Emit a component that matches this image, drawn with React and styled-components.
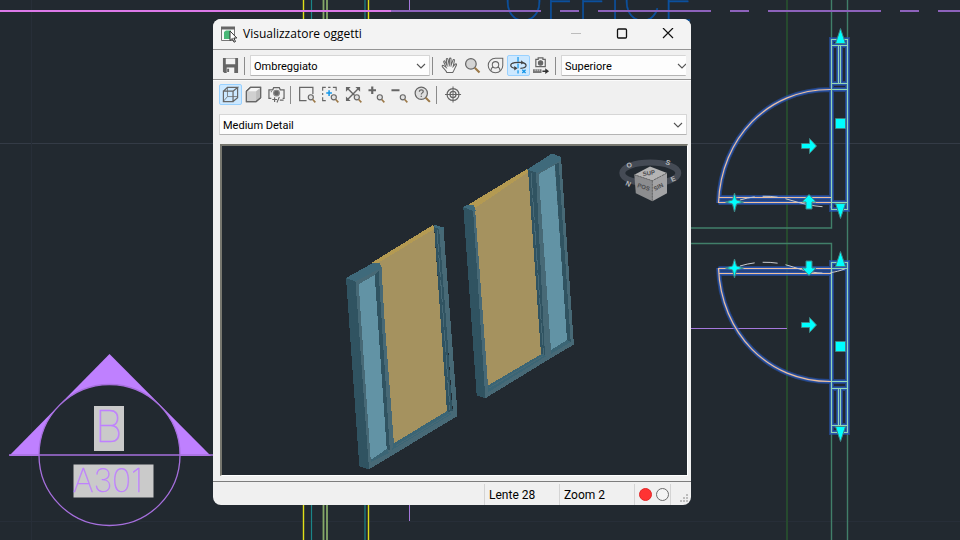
import React, { Fragment } from 'react';
import styled, { createGlobalStyle } from 'styled-components';

const GlobalStyle = createGlobalStyle`
    * {
        box-sizing: border-box;
    }

    body {
        margin: 0;
        background: #222930;
        color: #000;
        font-family: 'Open Sans', 'Noto Sans', sans-serif;
        font-size: 12px;
    }
`;

const Desktop = styled.main`
    position: relative;
    display: flex;
    min-height: 100vh;
    padding: 19px 269px 35px 213px;
    overflow: hidden;
`;

const Drawing = styled.svg`
    position: absolute;
    inset: 0;
    width: 100%;
    height: 100%;
    font-family: Inter, sans-serif;
    font-weight: 100;
`;

const Dialog = styled.section`
    position: relative;
    display: flex;
    flex-direction: column;
    flex: 1;
    min-width: 0;
    border-radius: 8px;
    background: #f0f0f0;
    overflow: hidden;
`;

const TitleBar = styled.header`
    display: flex;
    align-items: center;
    height: 30px;
    padding-left: 8px;
    background: #f3f3f3;
`;

const Title = styled.h1`
    flex: 1;
    margin: 0 0 0 6px;
    font-size: 12px;
    font-weight: 400;
    line-height: 16px;
    white-space: nowrap;
`;

const WindowButton = styled.button`
    display: grid;
    place-items: center;
    width: 46px;
    height: 30px;
    padding: 0;
    border: 0;
    background: transparent;
    color: ${props => (props.$muted ? '#bcbcbc' : '#111')};
`;

const Toolbar = styled.div`
    display: flex;
    align-items: center;
    height: 31px;
    padding: 2px 0 0 6px;
    border-top: 1px solid #949494;
    border-bottom: 1px solid #949494;
`;

const SecondToolbar = styled(Toolbar)`
    height: 30px;
    padding: 0 0 2px 6px;
    border-top-color: #fbfbfb;
    border-bottom: 0;
`;

const ToolButton = styled.button`
    display: grid;
    place-items: center;
    flex: none;
    width: 23px;
    height: 21px;
    padding: 0;
    border: 1px solid ${props => (props.$active ? '#99d1ff' : 'transparent')};
    border-radius: 2px;
    background: ${props => (props.$active ? '#cce8ff' : 'transparent')};
    color: #666;
`;

const Divider = styled.span`
    flex: none;
    width: 1px;
    height: 18px;
    margin: 0 5px 0 2px;
    background: #8b8b8b;
`;

const SelectBox = styled.div`
    display: grid;
    grid-template-columns: 1fr 18px;
    align-items: center;
    flex: ${props => props.$flex};
    min-width: 0;
    height: 21px;
    margin-right: ${props => (props.$clipped ? '5px' : '0')};
    overflow: hidden;
`;

const Select = styled.select`
    grid-row: 1;
    grid-column: 1 / 3;
    width: 100%;
    height: 21px;
    padding: 1px 18px 0 3px;
    border: 1px solid #d6d6d6;
    border-right-width: ${props => (props.$clipped ? '0' : '1px')};
    border-bottom-color: #b4b4b4;
    border-radius: 1px;
    background: #fdfdfd;
    color: #000;
    font-family: Roboto, sans-serif;
    font-size: 11px;
    appearance: none;
`;

const Chevron = styled.svg`
    grid-row: 1;
    grid-column: 2;
    z-index: 1;
    width: 10px;
    height: 6px;
    margin-left: ${props => (props.$clipped ? '9px' : '4px')};
    pointer-events: none;
`;

const DetailRow = styled.div`
    display: flex;
    padding: 4px 4px 9px 6px;
`;

const ViewFrame = styled.div`
    display: flex;
    flex-direction: column;
    flex: 1;
    min-height: 0;
    margin: 0 3px 5px 7px;
    border: solid;
    border-width: 2px 1px 1px 2px;
    border-color: #77776f #fff #fff #77776f;
    background: #222930;
`;

const Scene = styled.svg`
    display: block;
    flex: 1 1 0;
    width: 100%;
    min-height: 0;
    font-family: 'Liberation Sans', sans-serif;
`;

const StatusBar = styled.footer`
    display: flex;
    justify-content: flex-end;
    height: 24px;
    padding: 2px 0 0;
    border-top: 1px solid #7d7d7d;
    font-family: Roboto, sans-serif;
`;

const StatusCell = styled.span`
    display: flex;
    align-items: center;
    gap: 4px;
    width: ${props => props.$width}px;
    padding-left: 4px;
    border-left: 1px solid #d4d4d4;
    line-height: 16px;
    white-space: nowrap;
`;

const GripCell = styled.span`
    display: flex;
    align-items: flex-end;
    border-left: 1px solid #d4d4d4;
`;

const Lamp = styled.span`
    width: 13px;
    height: 13px;
    border: 1px solid ${props => (props.$on ? '#e02828' : '#6b6b6b')};
    border-radius: 50%;
    background: ${props => (props.$on ? '#ff3333' : '#f4f4f4')};
`;

const Icon = ({ children }) => (
    <svg width="17" height="17" viewBox="0 0 18 18" fill="none" stroke="#666" strokeWidth="1.3" aria-hidden="true">
        {children}
    </svg>
);

// small lens shared by the zoom icons
const Lens = () => (
    <g>
        <circle cx="12.5" cy="12" r="2.7" fill="#e2e2e2" strokeWidth="1.2" />
        <path d="M14.5 14.3l2.8 3" stroke="#9b7847" strokeWidth="1.7" />
    </g>
);

const icons = {
    save: (
        <Icon>
            <path d="M1 1h16v16H2.5L1 15.5z" fill="#666" stroke="none" />
            <path d="M4 1.6h10v6H4z" fill="#f3f3f3" stroke="none" />
            <path d="M5 11h8v6H5z" fill="#f3f3f3" stroke="none" />
            <path d="M6.5 12.5v3.5" strokeWidth="2" />
        </Icon>
    ),
    hand: (
        <Icon>
            <path
                d="M6.2 16.5C5.5 14 2.8 12 1.4 10.2c-.6-1 .5-1.8 1.5-1L5.5 11 2.9 5.3c-.4-1.2 1-1.7 1.5-.6l2.2 4.5-1-6.7c-.1-1.2 1.4-1.4 1.7-.2L8.8 8.5 9 2c.1-1.1 1.6-1.1 1.6.1l.1 6.6 2-5.4c.4-1.1 1.8-.6 1.5.5L12.9 10l2.2-2.4c.8-.8 1.8 0 1.2 1-1.4 2.4-2.2 5.4-4 7.9z"
                fill="#f6f6f6"
                strokeWidth="1.1"
            />
            <path d="M6.6 9.2l.7 1M8.8 8.5v1.4M10.7 8.7l-.2 1.5" strokeWidth="1" />
        </Icon>
    ),
    lens: (
        <Icon>
            <circle cx="7.3" cy="7.3" r="5.6" fill="#d4d4d4" />
            <path d="M11.4 11.4l5 5" stroke="#9b7847" strokeWidth="2.2" />
        </Icon>
    ),
    wheel: (
        <Icon>
            <path d="M9 1.3h7.7V9A7.7 7.7 0 1 1 9 1.3z" strokeWidth="1.1" />
            <circle cx="9" cy="8.3" r="3.4" strokeWidth="1.1" />
            <path d="M4.2 14.5c0-2.2 1-3.6 2.5-4M13.8 14.5c0-2.2-1-3.6-2.5-4" strokeWidth="1.1" />
        </Icon>
    ),
    orbit: (
        <Icon>
            <path d="M8.5 0v5M8.5 7v5M8.5 14v3.5M13 13.5l3.5 3.5M16.500 13.500L13 17" stroke="#1295e8" strokeWidth="1.3" />
            <path d="M6 12C-1 11-.5 7 5 6c6-1 12 0 12 3 0 1.800-2.500 2.800-6 3" stroke="#444" />
            <path d="M4.500 9.500L8 12l-3.500 2.300zM11.800 3.500l3 2.500-3 2z" fill="#444" stroke="none" />
        </Icon>
    ),
    walk: (
        <Icon>
            <path d="M3 2.500h2.500V1h5v1.500H13v7.700H3z" />
            <circle cx="8" cy="6.3" r="2.2" fill="#666" />
            <path d="M0 13h9v4H0z" fill="#777" stroke="none" />
            <path d="M2.3 13v2M4.5 13v2M6.700 13v2" stroke="#f0f0f0" strokeWidth=".7" />
            <path d="M10 15h4" stroke="#333" strokeWidth="1.6" />
            <path d="M13 12l4 3-4 3z" fill="#333" stroke="none" />
        </Icon>
    ),
    wire: (
        <Icon>
            <path d="M1.5 5.5h10.2v11H1.5zM1.5 5.5l4.3-4h10.7l-4.8 4M16.5 1.5v10.8l-4.8 4.2" />
            <path d="M5.8 1.5v9.7h10.7M5.8 11.2l-4.3 5" strokeWidth=".8" />
        </Icon>
    ),
    solid: (
        <Icon>
            <path d="M1.5 5.5l4.3-4h10.7v10.8l-4.8 4.2H1.5z" fill="#f5f5f5" />
            <path d="M1.5 5.5h10.2v11H1.5z" fill="#d0d0d0" stroke="none" />
            <path d="M11.7 5.5l4.3-3.5v10l-4.3 4z" fill="#bdbdbd" stroke="none" />
            <path d="M1.5 5.5l4.3-4h10.7v10.8l-4.8 4.2H1.5z" />
        </Icon>
    ),
    camera: (
        <Icon>
            <path d="M3.5 13H1V4h4l1-2.2h6L13 4h4v9h-1.5" />
            <circle cx="9" cy="7.5" r="3" fill="#666" stroke="#888" />
            <path d="M3 6h1" />
            <path d="M4.5 14.3h5M7 12v5M12 11.5l-2.5 6M12.5 15h4" strokeWidth="1.2" />
        </Icon>
    ),
    region: (
        <Icon>
            <path d="M8 15.5H.7v-14h14v7" />
            <Lens />
        </Icon>
    ),
    extent: (
        <Icon>
            <path d="M.7 5V1.5H4M11.5 1.5H15V5M.7 12v3.5H4M6.500 1.5H9M.7 7.5v2" strokeWidth="1.2" />
            <path d="M7.500 4.500v6M4.500 7.500h6" stroke="#1295e8" strokeWidth="1.6" />
            <Lens />
        </Icon>
    ),
    fit: (
        <Icon>
            <path d="M2.5 2.5l7.5 7.3M14.5 2.5L3 14" strokeWidth="1.5" />
            <path d="M1 1h5L1 6zM16 1h-5l5 5zM1 16h5l-5-5z" fill="#666" stroke="none" />
            <Lens />
        </Icon>
    ),
    zoomIn: (
        <Icon>
            <path d="M4.5.5v8M.5 4.500h8" strokeWidth="2.3" />
            <Lens />
        </Icon>
    ),
    zoomOut: (
        <Icon>
            <path d="M.5 4.5H9" strokeWidth="2.3" />
            <Lens />
        </Icon>
    ),
    help: (
        <Icon>
            <circle cx="7.700" cy="7.700" r="6.5" fill="#dedede" />
            <path d="M12.4 12.4l4.4 4.4" stroke="#9b7847" strokeWidth="2.2" />
            <path d="M5.7 6c0-2.6 4.2-2.5 4.1-.1 0 1.4-2.1 1.4-2.1 3.1M7.7 10.2v1.4" />
        </Icon>
    ),
    target: (
        <Icon>
            <circle cx="8.5" cy="9" r="6.3" />
            <circle cx="8.5" cy="9" r="3.2" />
            <path d="M8.5.5v17M0 9h17" strokeWidth="1.1" />
        </Icon>
    ),
};

const zoomTools = [
    ['region', 'Zoom finestra'],
    ['extent', 'Zoom estensioni'],
    ['fit', 'Zoom tutto'],
    ['zoomIn', 'Ingrandisci'],
    ['zoomOut', 'Riduci'],
    ['help', 'Guida zoom'],
];

const Tool = ({ name, label, active }) => (
    <ToolButton type="button" aria-label={label} aria-pressed={active} $active={active}>
        {icons[name]}
    </ToolButton>
);

const Picker = ({ label, value, flex, clipped }) => (
    <SelectBox $flex={flex} $clipped={clipped}>
        <Select aria-label={label} defaultValue={value} $clipped={clipped}>
            <option>{value}</option>
        </Select>
        <Chevron $clipped={clipped} viewBox="0 0 10 6" fill="none" stroke="#555" strokeWidth="1.1">
            <path d="M1 1l4 4 4-4" />
        </Chevron>
    </SelectBox>
);

const PlanGrips = () => (
    <g fill="#00ffff" stroke="#3f8585">
        <path d="M840.5 28.5l5 15h-10zM840.5 218.5l5-15h-10zM840.5 251.5l5 15h-10zM840.5 441.5l5-15h-10z" />
        <path d="M835.5 118.5h10v10h-10zM835.5 341.5h10v10h-10z" />
        <path d="M801.5 143.5h8v-5l7 7.5-7 7.5v-5h-8zM801.5 322.5h8v-5l7 7.5-7 7.5v-5h-8z" />
        <path d="M809 194.5l7 7.5h-4v7h-6v-7h-4zM809 275.5l7-7.5h-4v-7h-6v7h-4z" />
        <path d="M734.5 193l2 7 7 2-7 2-2 8-2-8-7-2 7-2zM734.5 259l2 7 7 2-7 2-2 8-2-8-7-2 7-2z" />
    </g>
);

const swing =
    'M831 89.5C768 89 721 138 718.5 203M718.5 197.5H831M718.5 202.5H831' +
    'M831 381.5C768 382 721 333 718.5 268M718.5 268.5H831M718.5 273.5H831';
const jambs =
    'M831.5 39.5h16v170h-16zM831.5 45.5h16M831.5 83.5h16M831.5 89.5h16M831.5 202.5h16M838.5 46v37M840.5 46v37' +
    'M831.5 262.5h16v170h-16zM831.5 268.5h16M831.5 381.5h16M831.5 388.5h16M831.5 425.5h16M838.5 389v36M840.5 389v36';

const FloorPlan = () => (
    <Drawing viewBox="0 0 960 540" preserveAspectRatio="xMidYMid slice" fill="none">
        <path d="M0 143.5h960" stroke="#343b46" />
        <path d="M31.5 0v540M0 521.5h960" stroke="#272e38" />
        <text x="503" y="21" fontSize="55" fill="#0c519f" stroke="#0c519f" strokeWidth=".5">
            OFFICE
        </text>
        <path d="M787 0v540" stroke="#264a2e" strokeWidth="2" />
        <path d="M831.5 0v228H691M691 243.5h140.5V540M847.5 0v540" stroke="#417f69" strokeWidth="1.4" />
        <path d="M303.5 0v540M368.5 0v540" stroke="#e0df18" strokeWidth="1.4" />
        <path d="M311.5 0v540M365 0v540" stroke="#1b8588" strokeWidth="1.2" />
        <path d="M323.5 0v540M327 0v540" stroke="#85a868" strokeWidth="1.8" />
        <path d="M409.5 0v12M409.5 505v16M691 328.5h96" stroke="#a578dc" />
        <path
            d="M391 11h150M560 11h19M598 11h113M730 11h19M768 11h113M900 11h19M938 11h22"
            stroke="#8d62bb"
            strokeWidth="2"
        />
        <path d="M0 11h391" stroke="#dc79e8" strokeWidth="2" />

        <path d="M109.5 354L211 456H9z" fill="#bf80ff" />
        <circle cx="109.5" cy="455" r="70.5" fill="#222930" stroke="#a66fdd" strokeWidth="1.3" />
        <path d="M9 455h204" stroke="#a66fdd" strokeWidth="1.6" />
        <path d="M94 406h30v45H94zM73.5 464.5h80v33h-80z" fill="#cacaca" />
        <text x="95" y="442" fontSize="43" fill="#bf80ff" stroke="#bf80ff" strokeWidth=".4">
            B
        </text>
        <text x="73" y="492" fontSize="32" fill="#bf80ff" stroke="#bf80ff" strokeWidth=".4">
            A301
        </text>

        <path d={swing + jambs} stroke="#2857b5" strokeWidth="5" strokeOpacity=".6" />
        <path d={swing + jambs} stroke="#2f66d8" strokeWidth="3" strokeOpacity=".5" />
        <path d={swing} stroke="#eebf9a" strokeWidth="1.2" />
        <path d={jambs} stroke="#93d6b4" strokeWidth="1.1" />
        <path
            d="M740 200c16-5 34-5 50 0s28 7 41 7M740 266c16-5 34-5 50 0s34 12 57 2"
            stroke="#c9cbcf"
            strokeDasharray="15 8 15 8 38 8"
        />
        <PlanGrips />
    </Drawing>
);

const ViewCube = () => (
    <g>
        <ellipse cx="650.3" cy="173" rx="28" ry="10.5" stroke="#454b55" strokeWidth="6" />
        <path d="M650 166.5l17 6.5-14.7 7.7-18-6z" fill="#b4b4b4" />
        <path d="M634.3 174.7l18 6v20.6l-16.5-8z" fill="#8c8d8f" />
        <path d="M652.3 180.7L667 173v20.3l-14.7 8z" fill="#a3a3a5" />
        <path d="M634.3 174.7l18 6L667 173M652.3 180.7v20.6" stroke="#666" strokeDasharray="2 1" />
        <g fill="#4a4a4c" fontSize="6" fontWeight="700">
            <text transform="translate(643 176) rotate(-8)">SUP</text>
            <text transform="translate(637 187) rotate(18)">POS</text>
            <text transform="translate(655 191) rotate(-28)">SIN</text>
        </g>
        <g fill="#b9bbbf" fontSize="7" fontWeight="700">
            <text transform="translate(627 168) rotate(-12)">O</text>
            <text transform="translate(665 164) rotate(20)">S</text>
            <text transform="translate(625 185) rotate(24)">N</text>
            <text transform="translate(672 182) rotate(-24)">E</text>
        </g>
    </g>
);

const DoorModel = () => (
    <Scene viewBox="222 146 465 329" fill="none" shapeRendering="crispEdges" role="img" aria-label="Vista 3D delle porte">
        {/* front pair, left leaf */}
        <path d="M355 281l26-13.5 12 176 54-33 9.7-3v9L369 469.3z" fill="#476976" />
        <path d="M346 278l9.5 3.5L369 469.3l-9.7-3z" fill="#305361" />
        <path d="M346 278l27-15 6-.5 3 5-26.7 14z" fill="#3f6a7b" />
        <path d="M374 275l4.7-3.7 12.5 178-4.5 1.5z" fill="#305361" />
        <path d="M371 458l16-10 2 5-18 9z" fill="#3b6575" />
        <path d="M358.7 284.3L374.7 275l12 174-16 11z" fill="#6293a5" />
        <path d="M374 262l60-36 13 185-54 33L381 268l-3-5z" fill="#a5925f" />
        <path d="M372 262.5l61-37.5 1 4-56 34z" fill="#b49a52" />
        <path d="M373 263l6-.5 3 5-3 3z" fill="#3f6a7b" />
        <path d="M378.5 270l3-3 3 53 9.5 124-1 7-3 2z" fill="#476976" />
        <path d="M434 225l6 2 12 180 1 4-6 1z" fill="#305361" />
        <path d="M439 227l4.5 1L457 407v9l-4-3z" fill="#476976" />
        <path d="M433 224.5l10.5 3v3l-9-3z" fill="#3f6a7b" />
        <path d="M437 230l13 180" stroke="#476976" strokeDasharray="22 3" />
        <path d="M393.5 443.5L447 411l5 3-60 36z" fill="#3b6575" />
        <path d="M396 446l53-32" stroke="#476976" />

        {/* rear pair, right leaf */}
        <path d="M472.7 209l3 2 12.5 175 85.8-47v5l-88.7 54.3z" fill="#476976" />
        <path d="M463.3 207l9.7 2.5 12.3 188.8-8.6-3z" fill="#305361" />
        <path d="M475 207.5L528 170l13.5 184-53.5 31.5z" fill="#a5925f" />
        <path d="M466.7 205.7L527 169l1.5 3L475 208z" fill="#b49a52" />
        <path d="M463.3 207l3.5-2 7 .5 2 5-3 .5z" fill="#3f6a7b" />
        <path d="M528 170l9 2 11.5 184-7.5-2z" fill="#305361" />
        <path d="M531 173l12.5 182" stroke="#476976" strokeDasharray="22 3" />
        <path d="M536 172.5l25-16 12.5 183 .5 5-24 14-5-2z" fill="#476976" />
        <path d="M555 164l3.7-1 12 178.5-3.7 1z" fill="#305361" />
        <path d="M527 169.5l25-16 9 3.5v3.5L537.5 173z" fill="#3f6a7b" />
        <path d="M488 385.5l53.5-31.5 5 2-58 36zM551 350l16-10 4 2-20 12z" fill="#3b6575" />
        <path d="M489 388l54-32" stroke="#476976" />
        <path d="M538.7 174l16-9L567 340l-16 10z" fill="#6293a5" />
        <g shapeRendering="auto">
            <ViewCube />
        </g>
    </Scene>
);

const App = () => (
    <Fragment>
        <GlobalStyle />
        <Desktop>
            <FloorPlan />
            <Dialog aria-label="Visualizzatore oggetti">
                <TitleBar>
                    <svg width="16" height="17" viewBox="0 0 16 17" fill="none" aria-hidden="true">
                        <path d="M.5 1.5h13v13H.5z" fill="#fafafa" stroke="#777" />
                        <path d="M0 .5h14v3H0z" fill="#666" />
                        <path d="M3 6l2-1.5h5V13H3z" fill="#49b877" />
                        <path d="M9 5v9.5l2.3-2 1.7 3.7 1.5-.7-1.7-3.5h3z" fill="#fff" stroke="#333" />
                    </svg>
                    <Title>Visualizzatore oggetti</Title>
                    <WindowButton type="button" aria-label="Riduci a icona" $muted>
                        <svg width="12" height="12" stroke="currentColor">
                            <path d="M1 5.5h10" />
                        </svg>
                    </WindowButton>
                    <WindowButton type="button" aria-label="Ingrandisci">
                        <svg width="12" height="12" fill="none" stroke="currentColor">
                            <rect x="1.5" y="1" width="9" height="9" rx="1" strokeWidth="1.3" />
                        </svg>
                    </WindowButton>
                    <WindowButton type="button" aria-label="Chiudi">
                        <svg width="12" height="12" stroke="currentColor" strokeWidth="1.2">
                            <path d="M1 0l10 10M11 0L1 10" />
                        </svg>
                    </WindowButton>
                </TitleBar>
                <Toolbar>
                    <Tool name="save" label="Salva" />
                    <Divider />
                    <Picker label="Stile di visualizzazione" value="Ombreggiato" flex="180" />
                    <Divider />
                    <Tool name="hand" label="Pan" />
                    <Tool name="lens" label="Zoom" />
                    <Tool name="wheel" label="Orbita" />
                    <Tool name="orbit" label="Orbita vincolata" active />
                    <Tool name="walk" label="Regola distanza" />
                    <Divider />
                    <Picker label="Vista" value="Superiore" flex="125" clipped />
                </Toolbar>
                <SecondToolbar>
                    <Tool name="wire" label="Prospettiva" active />
                    <Tool name="solid" label="Parallela" />
                    <Tool name="camera" label="Fotocamera" />
                    <Divider />
                    {zoomTools.map(([name, label]) => (
                        <Tool key={name} name={name} label={label} />
                    ))}
                    <Divider />
                    <Tool name="target" label="Centra" />
                </SecondToolbar>
                <DetailRow>
                    <Picker label="Rappresentazione" value="Medium Detail" flex="1" />
                </DetailRow>
                <ViewFrame>
                    <DoorModel />
                </ViewFrame>
                <StatusBar>
                    <StatusCell $width={75}>Lente 28</StatusCell>
                    <StatusCell $width={75}>Zoom 2</StatusCell>
                    <StatusCell $width={36}>
                        <Lamp $on />
                        <Lamp />
                    </StatusCell>
                    <GripCell>
                        <svg width="20" height="11" fill="#bdbdbd" aria-hidden="true">
                            <path d="M15 0h2v2h-2zM12 3h2v2h-2zM15 3h2v2h-2zM9 6h2v2H9zM12 6h2v2h-2zM15 6h2v2h-2z" />
                        </svg>
                    </GripCell>
                </StatusBar>
            </Dialog>
        </Desktop>
    </Fragment>
);

export default App;
